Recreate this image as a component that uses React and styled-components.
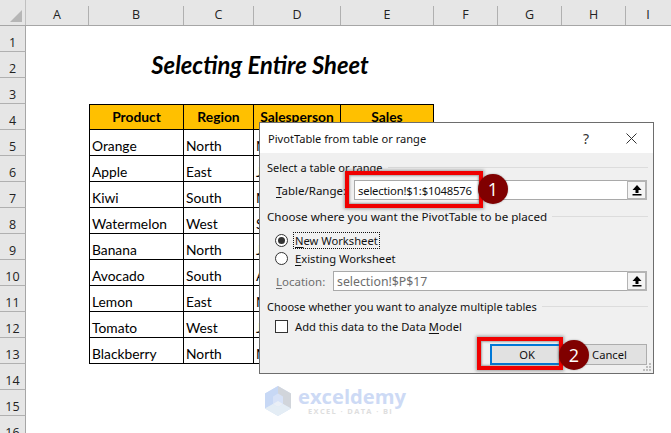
import React from 'react';
import styled, { createGlobalStyle } from 'styled-components';

const Global = createGlobalStyle`
  html, body { margin: 0; padding: 0; background: #fff; }
  body { width: 671px; height: 433px; overflow: hidden; }
`;

const COLS = '26px 63px 95px 70px 87px 93px 64px 64px 64px 1fr';

const Page = styled.div`
  position: relative;
  width: 671px;
  height: 433px;
  overflow: hidden;
  background: #fff;
  font-family: Lato, "Liberation Sans", sans-serif;
  color: #000;
`;

const ColHeader = styled.div`
  display: grid;
  grid-template-columns: ${COLS};
  height: 26px;
  background: #e6e6e6;
  border-bottom: 1px solid #a6a6a6;
  box-sizing: border-box;
`;

const Corner = styled.div`
  position: relative;
  border-right: 1px solid #c0c0c0;
  &::after {
    content: '';
    position: absolute;
    right: 3px;
    bottom: 3px;
    width: 0;
    height: 0;
    border-left: 12px solid transparent;
    border-bottom: 12px solid #b6b6b6;
  }
`;

const ColHead = styled.div`
  display: flex;
  align-items: flex-end;
  justify-content: center;
  font: 12.5px "Open Sans", sans-serif;
  color: #222;
  padding-bottom: 2px;
  margin-top: 6px;
  border-right: 1px solid ${p => (p.$last ? 'transparent' : '#b0b0b0')};
`;

const Row = styled.div`
  display: grid;
  grid-template-columns: ${COLS};
  grid-auto-rows: 26px;
  height: 26px;
`;

const RowHead = styled.div`
  display: flex;
  align-items: flex-end;
  justify-content: center;
  background: #e6e6e6;
  border-bottom: 1px solid #b0b0b0;
  border-right: 1px solid #a6a6a6;
  font: 12.5px/17px "Open Sans", sans-serif;
  color: #222;
  box-sizing: border-box;
`;

const Title = styled.div`
  grid-column: 3 / 7;
  display: flex;
  align-items: center;
  justify-content: center;
  font-weight: 700;
  font-style: italic;
  font-size: 23.8px;
  line-height: 20px;
  padding: 0 3px 1px 0;
`;

const Cell = styled.div`
  display: flex;
  align-items: flex-end;
  justify-content: ${p => (p.$head ? 'center' : 'flex-start')};
  grid-column: ${p => p.$col};
  background: ${p => (p.$head ? '#ffc000' : '#fff')};
  font-size: 13.8px;
  font-weight: ${p => (p.$head ? 700 : 400)};
  line-height: 18px;
  padding: ${p => (p.$head ? '0 0 3px' : '0 0 0 2px')};
  box-sizing: border-box;
  border-right: 1px solid #000;
  border-bottom: 1px solid #000;
  border-top: ${p => (p.$head ? '1px solid #000' : 'none')};
  border-left: ${p => (p.$first ? '1px solid #000' : 'none')};
  white-space: nowrap;
  overflow: hidden;
`;

const Dialog = styled.div`
  position: absolute;
  left: 259px;
  top: 122px;
  width: 395px;
  height: 252px;
  box-sizing: border-box;
  border: 1px solid #6d6d6d;
  background: #f0f0f0;
  font-family: "Noto Sans", sans-serif;
  font-size: 11.2px;
  color: #111;
  display: flex;
  flex-direction: column;
`;

const TitleBar = styled.div`
  height: 30px;
  flex: none;
  background: #fff;
  display: flex;
  align-items: center;
  padding: 0 16px 0 8px;
  font-size: 11.1px;
`;

const TitleText = styled.span`
  flex: 1;
`;

const HelpMark = styled.span`
  font-size: 14px;
  margin-right: 37px;
  color: #333;
`;

const DialogBody = styled.div`
  flex: 1;
  position: relative;
  padding: 5px 5px 0 7px;
  display: flex;
  flex-direction: column;
`;

const GroupLabel = styled.div`
  display: flex;
  align-items: center;
  gap: 5px;
  height: 18px;
  font-size: ${p => p.$size || '11px'};
  margin-top: ${p => p.$mt || '0'};
  white-space: nowrap;
  &::after {
    content: '';
    flex: 1;
    height: 1px;
    background: #dcdcdc;
  }
`;

const FieldRow = styled.div`
  display: flex;
  align-items: center;
  height: 20px;
  margin-top: ${p => p.$mt || '0'};
  padding-left: 9px;
`;

const FieldLabel = styled.label`
  width: ${p => p.$w};
  flex: none;
  font-size: 11.5px;
  color: ${p => (p.$dim ? '#6d6d6d' : '#111')};
  white-space: nowrap;
`;

const RefBox = styled.div`
  flex: 1;
  height: 20px;
  margin-right: 1px;
  box-sizing: border-box;
  display: flex;
  background: #fff;
  border: 1px solid #a9a9a9;
  border-right: none;
`;

const RefInput = styled.div`
  flex: 1;
  padding-left: 3px;
  display: flex;
  align-items: center;
  font-size: ${p => (p.$dim ? '12.3px' : '11.3px')};
  letter-spacing: ${p => (p.$dim ? '0' : '-0.2px')};
  color: ${p => (p.$dim ? '#6d6d6d' : '#111')};
  white-space: nowrap;
`;

const RefButton = styled.div`
  flex: none;
  width: 20px;
  box-sizing: border-box;
  margin-top: -1px;
  margin-bottom: -1px;
  background: #f4f4f4;
  border: 2px solid #b4b4b4;
  border-left-width: 1px;
  display: flex;
  align-items: center;
  justify-content: center;
`;

const OptionRow = styled.div`
  display: flex;
  align-items: center;
  height: 18px;
  padding-left: 8px;
  gap: 6px;
  margin-top: ${p => p.$mt || '0'};
`;

const Radio = styled.span`
  width: 13px;
  height: 13px;
  box-sizing: border-box;
  border-radius: 50%;
  border: 1px solid #333;
  background: #fff;
  display: flex;
  align-items: center;
  justify-content: center;
  &::after {
    content: '';
    width: 7px;
    height: 7px;
    border-radius: 50%;
    background: ${p => (p.$on ? '#333' : 'transparent')};
  }
`;

const Check = styled.span`
  width: 13px;
  height: 13px;
  box-sizing: border-box;
  border: 1px solid #333;
  background: #fff;
`;

const OptionLabel = styled.span`
  outline: ${p => (p.$focus ? '1px dotted #111' : 'none')};
  padding: 0 1px;
  white-space: nowrap;
`;

const Key = styled.span`
  text-decoration: underline;
  text-underline-offset: 2px;
`;

const Buttons = styled.div`
  display: flex;
  justify-content: flex-end;
  gap: 8px;
  margin-top: 9px;
  padding-right: 1px;
`;

const Button = styled.div`
  width: ${p => p.$w};
  height: 21px;
  box-sizing: border-box;
  display: flex;
  align-items: center;
  justify-content: center;
  background: #e1e1e1;
  border: ${p => (p.$primary ? '2px solid #0078d7' : '1px solid #adadad')};
`;

const Grip = styled.svg`
  position: absolute;
  right: 1px;
  bottom: 1px;
`;

const Highlight = styled.div`
  position: absolute;
  box-sizing: border-box;
  border: 4px solid #f00000;
  box-shadow: 0 0 3px 1px rgba(90, 90, 90, 0.55), inset 0 0 2px 1px rgba(90, 90, 90, 0.5);
  left: ${p => p.$x}px;
  top: ${p => p.$y}px;
  width: ${p => p.$w}px;
  height: ${p => p.$h}px;
`;

const Badge = styled.div`
  position: absolute;
  left: ${p => p.$x - 15}px;
  top: ${p => p.$y - 15}px;
  width: 30px;
  height: 30px;
  border-radius: 50%;
  background: #800000;
  color: #fff;
  display: flex;
  align-items: center;
  justify-content: center;
  font: 18px "Open Sans", sans-serif;
  box-shadow: 0 0 2px rgba(0, 0, 0, 0.35);
`;

const Watermark = styled.div`
  position: absolute;
  left: 264px;
  top: 385px;
  display: flex;
  gap: 6px;
  opacity: 0.95;
`;

const BrandText = styled.div`
  display: flex;
  flex-direction: column;
  align-items: flex-start;
`;

const BrandName = styled.div`
  font: 700 20.2px/23px "Open Sans", sans-serif;
  color: #cbd9f5;
`;

const BrandTag = styled.div`
  font: 700 7.5px/7px "Open Sans", sans-serif;
  color: #dddddd;
  letter-spacing: 1.35px;
  margin-left: 10px;
`;

const ArrowUp = () => (
  <svg width="12" height="12" viewBox="0 0 12 12">
    <path d="M6 1 L10.5 6 H7.5 V9 H4.5 V6 H1.5 Z" fill="#000" />
    <rect x="1.5" y="10" width="9" height="1.5" fill="#000" />
  </svg>
);

const columns = ['A', 'B', 'C', 'D', 'E', 'F', 'G', 'H', 'I'];
const data = [
  ['Orange', 'North', 'Mike'],
  ['Apple', 'East', 'John'],
  ['Kiwi', 'South', 'Mike'],
  ['Watermelon', 'West', 'Sam'],
  ['Banana', 'North', 'John'],
  ['Avocado', 'South', 'Adam'],
  ['Lemon', 'East', 'Mike'],
  ['Tomato', 'West', 'John'],
  ['Blackberry', 'North', 'Mike'],
];

export default function App() {
  return (
    <Page>
      <Global />
      <ColHeader>
        <Corner />
        {columns.map((c, i) => (
          <ColHead key={c} $last={i === columns.length - 1}>{c}</ColHead>
        ))}
      </ColHeader>
      <Row><RowHead>1</RowHead></Row>
      <Row>
        <RowHead>2</RowHead>
        <Title>Selecting Entire Sheet</Title>
      </Row>
      <Row><RowHead>3</RowHead></Row>
      <Row>
        <RowHead>4</RowHead>
        <Cell $head $first $col={3}>Product</Cell>
        <Cell $head $col={4}>Region</Cell>
        <Cell $head $col={5}>Salesperson</Cell>
        <Cell $head $col={6}>Sales</Cell>
      </Row>
      {data.map((d, i) => (
        <Row key={d[0]}>
          <RowHead>{i + 5}</RowHead>
          <Cell $first $col={3}>{d[0]}</Cell>
          <Cell $col={4}>{d[1]}</Cell>
          <Cell $col={5}>{d[2]}</Cell>
          <Cell $col={6} />
        </Row>
      ))}
      {[14, 15, 16].map(n => (
        <Row key={n}><RowHead>{n}</RowHead></Row>
      ))}

      <Dialog>
        <TitleBar>
          <TitleText>PivotTable from table or range</TitleText>
          <HelpMark>?</HelpMark>
          <svg width="11" height="11" viewBox="0 0 11 11">
            <path d="M.5.5l10 10M10.5.5l-10 10" stroke="#333" strokeWidth="1" fill="none" />
          </svg>
        </TitleBar>
        <DialogBody>
          <GroupLabel>Select a table or range</GroupLabel>
          <FieldRow $mt="4px">
            <FieldLabel $w="78px"><Key>T</Key>able/Range:</FieldLabel>
            <RefBox>
              <RefInput>selection!$1:$1048576</RefInput>
              <RefButton><ArrowUp /></RefButton>
            </RefBox>
          </FieldRow>
          <GroupLabel $mt="7px" $size="11.6px">Choose where you want the PivotTable to be placed</GroupLabel>
          <OptionRow $mt="6px">
            <Radio $on />
            <OptionLabel $focus><Key>N</Key>ew Worksheet</OptionLabel>
          </OptionRow>
          <OptionRow>
            <Radio />
            <OptionLabel><Key>E</Key>xisting Worksheet</OptionLabel>
          </OptionRow>
          <FieldRow $mt="4px">
            <FieldLabel $w="57px" $dim><Key>L</Key>ocation:</FieldLabel>
            <RefBox>
              <RefInput $dim>selection!$P$17</RefInput>
              <RefButton><ArrowUp /></RefButton>
            </RefBox>
          </FieldRow>
          <GroupLabel $mt="6px">Choose whether you want to analyze multiple tables</GroupLabel>
          <OptionRow $mt="2px">
            <Check />
            <OptionLabel>Add this data to the Data <Key>M</Key>odel</OptionLabel>
          </OptionRow>
          <Buttons>
            <Button $primary $w="74px">OK</Button>
            <Button $w="75px">Cancel</Button>
          </Buttons>
          <Grip width="9" height="9" viewBox="0 0 9 9">
            <path d="M6 0h2v2H6zM3 3h2v2H3zM6 3h2v2H6zM0 6h2v2H0zM3 6h2v2H3zM6 6h2v2H6z" fill="#bdbdbd" />
          </Grip>
        </DialogBody>
      </Dialog>

      <Highlight $x={345} $y={171} $w={138} $h={37} />
      <Badge $x={493} $y={189}>1</Badge>
      <Highlight $x={477} $y={337} $w={86} $h={33} />
      <Badge $x={574} $y={355}>2</Badge>

      <Watermark>
        <svg width="28" height="32" viewBox="0 0 28 32">
          <path d="M14 1 L27 8.5 V23.5 L14 31 L1 23.5 V8.5 Z" fill="#d5e1f7" />
          <path d="M14 1 L27 8.5 V23.5 L19 19 V11.5 L14 8.5 Z" fill="#cfd3da" />
          <path d="M14 1 L1 8.5 V23.5 L9 19 V11.5 L14 8.5 Z" fill="#c5d6f5" />
          <path d="M9 19 L14 16 L19 19 L14 22 Z" fill="#e9eff6" />
          <path d="M1 23.5 L9 19 L14 22 L19 19 L27 23.5 L14 31 Z" fill="#e3edf5" />
        </svg>
        <BrandText>
          <BrandName>exceldemy</BrandName>
          <BrandTag>EXCEL · DATA · BI</BrandTag>
        </BrandText>
      </Watermark>
    </Page>
  );
}
